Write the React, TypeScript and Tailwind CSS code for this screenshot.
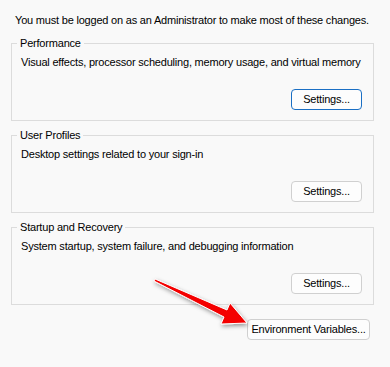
import React from "react";

const btn =
  "h-[21px] rounded-[4px] border bg-[#fdfdfd] leading-none text-black flex items-center justify-center whitespace-nowrap";

function Group({ title, desc, focused }: { title: string; desc: string; focused?: boolean }) {
  return (
    <fieldset className="border border-[#dcdcdc] ml-[11px] mr-[16px] pl-[9px] pr-[11px] pb-[10px]">
      <legend className="ml-[-4px] px-[3px] leading-[15px]">{title}</legend>
      <div className="mt-[4px] leading-[15px] whitespace-nowrap">{desc}</div>
      <div className="flex justify-end mt-[19px]">
        <button
          className={
            btn +
            " w-[71px] " +
            (focused ? "border-[#1a6fc4] border-[1.5px]" : "border-[#d0d0d0]")
          }
        >
          Settings...
        </button>
      </div>
    </fieldset>
  );
}

export default function App() {
  return (
    <div
      className="relative w-[390px] h-[367px] bg-[#f9f9f9] text-[11px] tracking-[-0.2px] text-black overflow-hidden"
      style={{ fontFamily: '"Liberation Sans", Arial, sans-serif' }}
    >
      <div className="pt-[13px] pl-[15px] leading-[15px] whitespace-nowrap">
        You must be logged on as an Administrator to make most of these changes.
      </div>
      <div className="mt-[8px] flex flex-col gap-[7px]">
        <Group
          title="Performance"
          desc="Visual effects, processor scheduling, memory usage, and virtual memory"
          focused
        />
        <Group title="User Profiles" desc="Desktop settings related to your sign-in" />
        <Group
          title="Startup and Recovery"
          desc="System startup, system failure, and debugging information"
        />
      </div>
      <div className="flex justify-end mr-[20px] mt-[14px]">
        <button className={btn + " w-[123px] border-[#d0d0d0]"}>Environment Variables...</button>
      </div>
      <svg
        className="absolute left-0 top-0 pointer-events-none"
        width="390"
        height="367"
        viewBox="0 0 390 367"
      >
        <defs>
          <filter id="sh" x="-20%" y="-20%" width="140%" height="140%">
            <feDropShadow dx="1" dy="2" stdDeviation="2" floodColor="#000" floodOpacity="0.4" />
          </filter>
        </defs>
        <polygon
          points="155,279 227,310 230,303 247,323 221,324 224,317 154,281"
          fill="#f40000"
          stroke="#ffffff"
          strokeWidth="1"
          strokeLinejoin="round"
          filter="url(#sh)"
        />
      </svg>
    </div>
  );
}
